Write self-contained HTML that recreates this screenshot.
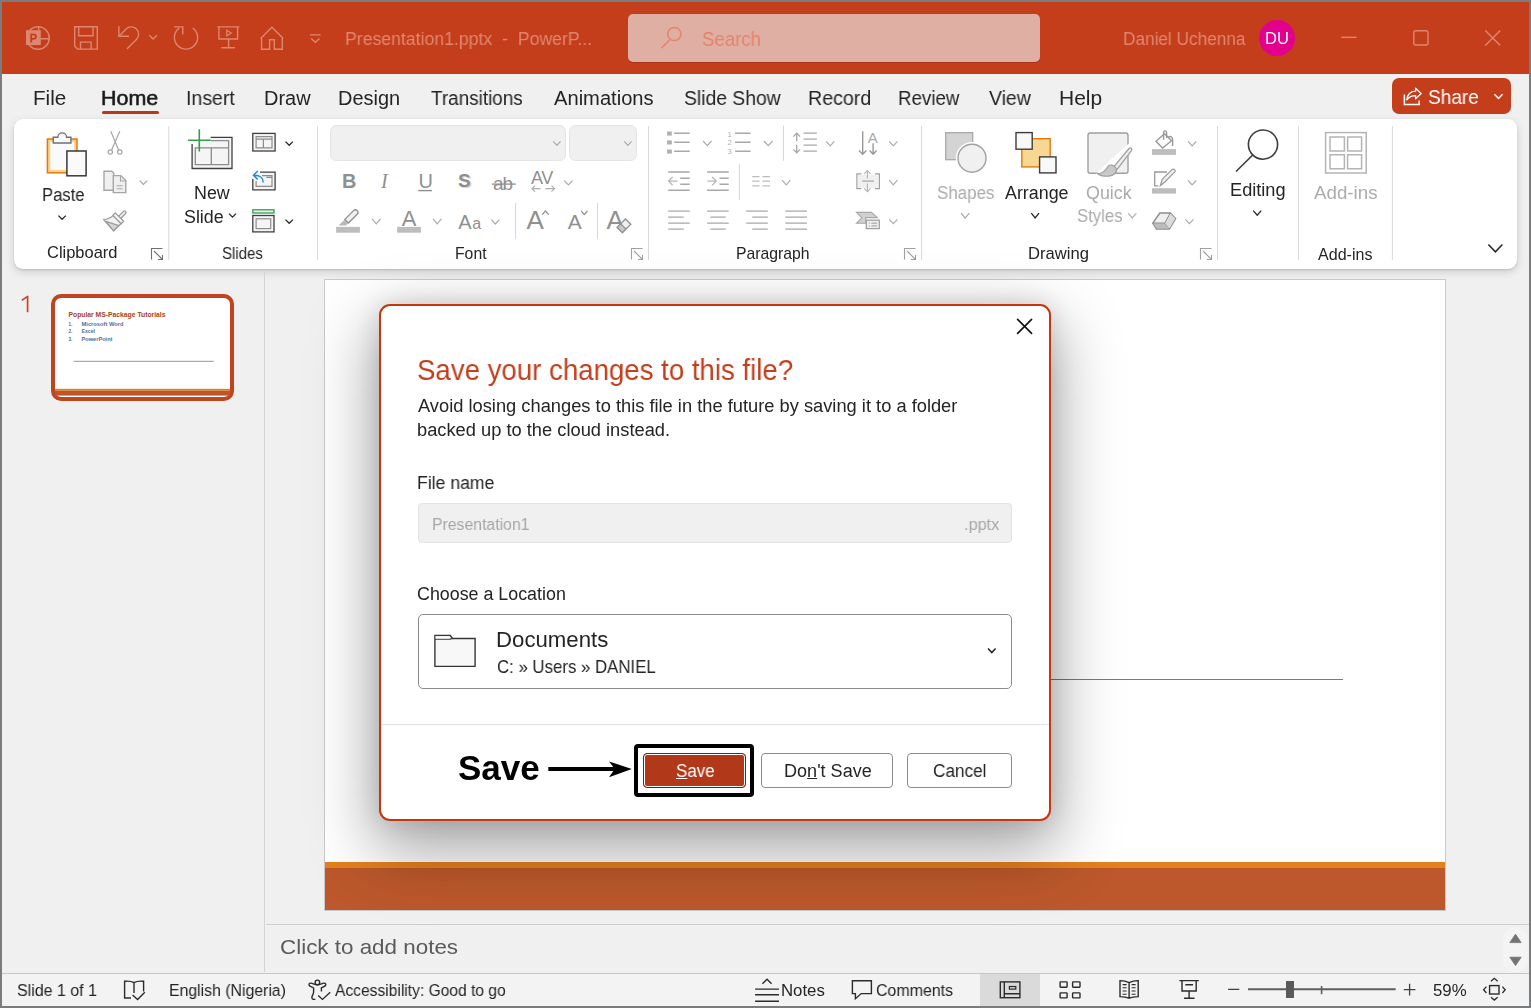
<!DOCTYPE html>
<html><head><meta charset="utf-8">
<style>
html,body{margin:0;padding:0;width:1531px;height:1008px;overflow:hidden;background:#777;}
body{position:relative;font-family:"Liberation Sans",sans-serif;}
.a{position:absolute;box-sizing:border-box;}
.t{position:absolute;white-space:pre;line-height:1;transform-origin:0 0;will-change:transform;font-family:"Liberation Sans",sans-serif;}
svg{position:absolute;overflow:visible;}
</style></head><body>
<!-- window frame -->
<div class="a" style="left:0;top:0;width:1531px;height:1008px;background:#7b7c7d;"></div>
<div class="a" style="left:2px;top:2px;width:1527px;height:1004px;background:#f0f0f0;"></div>
<!-- title bar -->
<div class="a" style="left:2px;top:2px;width:1527px;height:72px;background:#C43E1C;"></div>
<div class="a" style="left:628px;top:14px;width:412px;height:48px;background:#E0AFA3;border-radius:5px;box-shadow:0 1px 1px rgba(0,0,0,0.15);"></div>
<div class="a" style="left:1259px;top:20px;width:36px;height:36px;border-radius:50%;background:#E3008C;"></div>
<!-- share -->
<div class="a" style="left:1392px;top:78px;width:119px;height:36px;border-radius:7px;background:#C43E1C;"></div>
<!-- home underline -->
<div class="a" style="left:102px;top:111px;width:57px;height:3px;border-radius:2px;background:#B7391B;"></div>
<!-- ribbon card -->
<div class="a" style="left:14px;top:119px;width:1503px;height:150px;background:#fff;border-radius:9px;box-shadow:0 3px 8px rgba(0,0,0,0.15), 0 1px 2px rgba(0,0,0,0.12);"></div>
<!-- pane divider -->
<div class="a" style="left:264px;top:270px;width:1px;height:702px;background:#d4d4d4;"></div>
<!-- slide -->
<div class="a" style="left:324px;top:279px;width:1122px;height:632px;background:#fff;border:1px solid #c9c9c9;"></div>
<div class="a" style="left:325px;top:862px;width:1120px;height:6px;background:#E3801F;"></div>
<div class="a" style="left:325px;top:868px;width:1120px;height:42px;background:#BC582B;"></div>
<div class="a" style="left:1050px;top:679px;width:293px;height:1px;background:#7a7a7a;"></div>
<!-- notes divider -->
<div class="a" style="left:266px;top:924px;width:1263px;height:1px;background:#cfcfcf;"></div>
<!-- status bar -->
<div class="a" style="left:2px;top:973px;width:1527px;height:1px;background:#c9c7c5;"></div>
<div class="a" style="left:2px;top:974px;width:1527px;height:32px;background:#f3f3f3;"></div>
<div class="a" style="left:980px;top:974px;width:60px;height:32px;background:#dadada;"></div>
<!-- thumbnail -->
<div class="a" style="left:51px;top:294px;width:183px;height:107px;border:4px solid #C0441E;border-radius:10px;background:#fff;"></div>
<svg width="1531" height="1008" style="left:0;top:0">
<g fill="none" stroke="#DD8670" stroke-width="1.4">
 <circle cx="38" cy="38" r="11.3"/>
 <path d="M38.7 26.5V38.7H49.5"/>
 <rect x="26" y="30.2" width="14.8" height="14.8" fill="#DD8670" stroke="none"/>
 <path d="M31.2 42.6V34.3H33.6A2.3 2.3 0 0 1 33.6 38.9H31.2" stroke="#C43E1C" stroke-width="1.8"/>
 <path d="M74.7 26.8H97.3V49.1H77.6L74.7 46.2Z"/>
 <path d="M78.7 26.8V35.7H93V26.8"/>
 <path d="M80.5 49.1V42.1H91.1V49.1"/>
 <path d="M118.9 26.2V36.3H129"/>
 <path d="M119.3 35.9L126.05 29.05A7.35 7.35 0 0 1 136.45 39.45L126.9 49"/>
 <path d="M149.3 35.3L153.1 39.1L156.9 35.3"/>
 <path d="M192.8 28.1A11.6 11.6 0 1 1 179.2 28.1" />
 <path d="M174.2 26.9H182.8V34.5"/>
 <path d="M217.3 26.9H239.4M218.9 26.9V39H237.6V26.9M228.6 39V47.8M221.3 47.8H235"/>
 <path d="M226.8 30.2V35.8L231.2 33Z" stroke-width="1.2"/>
 <path d="M260.6 38.6L271.9 27.2L283.3 38.6M261.6 37.6V49.2H269.6V39.8H274.3V49.2H282.3V37.6"/>
 <path d="M310 34.9H320.7M311.2 38.5L315.4 42.3L319.5 38.5"/>
 <path d="M661.3 48.3L669.5 40.1" stroke="#E3846E" stroke-width="1.5"/>
 <circle cx="674.3" cy="34" r="6.6" stroke="#E3846E" stroke-width="1.5"/>
 <path d="M1341.3 37.3H1356.5" />
 <rect x="1413.8" y="30.8" width="14.2" height="14.2" rx="2"/>
 <path d="M1485.3 30.6L1500.3 45.6M1500.3 30.6L1485.3 45.6"/>
</g>
<g fill="none" stroke="#fff" stroke-width="1.5">
 <path d="M1404.4 94.6V104.4H1419.2V100.4"/>
 <path d="M1406.8 99.8C1407.4 94.6 1410.6 91.4 1415.6 91.2V88.2L1421.2 93.6L1415.6 98.8V95.6C1411.6 95.6 1408.8 97.2 1406.8 99.8Z" stroke-width="1.3" stroke-linejoin="round"/>
 <path d="M1494.4 94.3L1498.5 98.5L1502.6 94.3"/>
</g>

<g fill="none" stroke-width="1.4">
 <!-- paste -->
 <rect x="47.4" y="139" width="29.6" height="33.8" fill="#F7D38A" stroke="#E2780F" stroke-width="1.5"/>
 <rect x="50.3" y="141.9" width="23.8" height="28" fill="#FAFAFA" stroke="none"/>
 <path d="M53.3 143V137.3H57.8A4.4 4.4 0 0 1 66.6 137.3H70.9V143Z" fill="#FAFAFA" stroke="#707070"/>
 <rect x="66.9" y="151" width="19.2" height="24.8" fill="#FAFAFA" stroke="#383838" stroke-width="1.5"/>
 <path d="M58.4 215.6L62.1 219.3L65.8 215.6" stroke="#262626" stroke-width="1.3"/>
 <!-- cut -->
 <g stroke="#A6A6A6" stroke-width="1.2">
 <path d="M110.8 131.2L118.6 150M119.8 131.2L111.6 150"/>
 <circle cx="110.3" cy="152" r="2.2"/><circle cx="119.8" cy="152" r="2.2"/>
 </g>
 <!-- copy -->
 <g stroke="#A6A6A6" stroke-width="1.4" fill="#F0F0F0">
 <path d="M104 171.3H111.8L113.8 173.3V190.2H104Z"/>
 <path d="M113.3 175.6H120.8L125.8 180.6V192.6H113.3Z"/>
 <path d="M120.5 175.8V181H125.6M116.6 185.8H122.6M116.6 188.8H122.6" fill="none" stroke-width="1.1"/>
 </g>
 <path d="M139.6 180.6L143.4 184.4L147.1 180.6" stroke="#A6A6A6" stroke-width="1.2"/>
 <!-- format painter -->
 <g stroke="#9C9C9C" stroke-width="1.3" stroke-linejoin="round">
 <path d="M113 215.6C110.5 218 107 219.3 103.6 219.6L113.6 230.8L121.4 223.2Z" fill="#F2F2F2"/>
 <path d="M105.8 221.4L118.8 225.6L113.6 230.8Z" fill="#D4D4D4"/>
 <path d="M119.6 217.4L124.6 212.4" stroke-width="4.2" stroke-linecap="round"/>
 <path d="M119.6 217.4L124.6 212.4" stroke="#F4F4F4" stroke-width="1.6" stroke-linecap="round"/>
 <path d="M115.3 212.9L123.7 221.3L121.2 223.8L112.8 215.4Z" fill="#F4F4F4"/>
 </g>
 <!-- new slide -->
 <path d="M210.7 137.4H232V168.5H192.1V144" stroke="#404040" stroke-width="1.3" fill="#F5F5F5"/>
 <path d="M211 140.6H228.6V164.7H195.3V147.8H228.6M211.3 147.8V164.7" stroke="#8C8C8C" stroke-width="1.3"/>
 <rect x="193.3" y="138.2" width="4" height="8" fill="#fff" stroke="none"/>
 <path d="M188.1 140.2H210.7M199.3 129.3V151.6" stroke="#2F9E4E" stroke-width="1.6"/>
 <!-- layout -->
 <rect x="252.8" y="133.4" width="22.3" height="17.6" stroke="#404040" stroke-width="1.3" fill="#F5F5F5"/>
 <path d="M256.1 136.6H272V147.8H256.1ZM256.1 139.2H272M263.4 139.2V147.8" stroke="#8C8C8C" stroke-width="1.2"/>
 <path d="M285.5 141.6L289.2 145.3L292.9 141.6" stroke="#262626" stroke-width="1.3"/>
 <!-- reset -->
 <path d="M260 172.2H275.1V189.8H252.8V179" stroke="#404040" stroke-width="1.3" fill="#F5F5F5"/>
 <path d="M262 175.7H272V186.3H256.1V181M266.4 177.3H272" stroke="#8C8C8C" stroke-width="1.2"/>
 <path d="M263.2 182.4C263.2 178.4 260 175.3 254.4 175.3M257.8 171L253.5 175.3L257.6 179.4" stroke="#1F8AD6" stroke-width="1.5"/>
 <!-- section -->
 <rect x="252.8" y="209.8" width="21.2" height="3.2" stroke="#2F9E4E" stroke-width="1.3" fill="#F5F5F5"/>
 <rect x="252.8" y="215.5" width="21.2" height="16.4" stroke="#404040" stroke-width="1.3" fill="#F5F5F5"/>
 <rect x="256.1" y="218.8" width="14.6" height="9.8" stroke="#8C8C8C" stroke-width="1.2"/>
 <path d="M285.5 219.6L289.2 223.3L292.9 219.6" stroke="#262626" stroke-width="1.3"/>
 <path d="M229 213.6L232.5 217.1L236 213.6" stroke="#262626" stroke-width="1.3"/>
 <!-- separators -->
 <path d="M168.8 126V260M317.5 126V260M648.5 126V260M921.6 126V260M1217.5 126V260M1298.5 126V260M1392.4 126V260" stroke="#D9D9D9" stroke-width="1"/>
 <!-- dialog launchers -->
 <g stroke="#707070" stroke-width="1.1">
 <path d="M151.5 259.5V248.5H162.5M154 251L162 259M158 259.5H162.5V255"/>
 </g>
 <g stroke="#A0A0A0" stroke-width="1.1">
 <path d="M631.5 259.5V248.5H642.5M634 251L642 259M638 259.5H642.5V255"/>
 <path d="M904.5 259.5V248.5H915.5M907 251L915 259M911 259.5H915.5V255"/>
 <path d="M1200.5 259.5V248.5H1211.5M1203 251L1211 259M1207 259.5H1211.5V255"/>
 </g>
</g>

<g fill="none">
 <!-- font boxes -->
 <rect x="330.5" y="125.5" width="235" height="35" rx="6" fill="#F0F0F0" stroke="#E4E4E4"/>
 <rect x="569.5" y="125.5" width="67" height="35" rx="6" fill="#F0F0F0" stroke="#E4E4E4"/>
 <path d="M553.3 141.3L556.9 145.3L560.5 141.3" stroke="#A8A8A8" stroke-width="1.2" fill="none"/>
 <path d="M624.3 141.3L627.9 145.3L631.5 141.3" stroke="#A8A8A8" stroke-width="1.2" fill="none"/>
 <g font-family="Liberation Sans" fill="#8F8F8F" stroke="none">
  <text x="342" y="188" font-size="20" font-weight="bold">B</text>
  <text x="381" y="188" font-size="20" font-style="italic" font-family="Liberation Serif">I</text>
  <text x="418.4" y="187.6" font-size="20">U</text>
  <text x="459.5" y="187.5" font-size="19" font-weight="bold" fill="#D8D8D8">S</text>
  <text x="458" y="186.5" font-size="19" font-weight="bold">S</text>
  <text x="493" y="189.5" font-size="19" letter-spacing="-1">ab</text>
  <text x="531" y="183.6" font-size="18" letter-spacing="-0.5">AV</text>
  <text x="458.2" y="228.6" font-size="20">A</text>
  <text x="472.3" y="228.6" font-size="16">a</text>
  <text x="526.4" y="228.6" font-size="26">A</text>
  <text x="567.8" y="228.6" font-size="21">A</text>
  <text x="606.5" y="228.6" font-size="26">A</text>
 </g>
 <path d="M418.3 190.6H431.9" stroke="#8F8F8F" stroke-width="1.4"/>
 <path d="M491.9 184.1H515.8" stroke="#8F8F8F" stroke-width="1.3"/>
 <path d="M532 188.7H540.5M535 185.7L532 188.7L535 191.7M545.5 188.7H554.5M551.5 185.7L554.5 188.7L551.5 191.7" stroke="#B0B0B0" stroke-width="1.2"/>
 <path d="M564.3 180.6L568.4 184.8L572.5 180.6" stroke="#ABABAB" stroke-width="1.2" fill="none"/>
 <!-- highlighter -->
 <rect x="336.1" y="226.9" width="23.8" height="5.8" fill="#BDBDBD"/>
 <path d="M344.8 219.4L353.6 210.6A2 2 0 0 1 357.2 214.2L348.4 223Z" fill="#F0F0F0" stroke="#8F8F8F" stroke-width="1.3"/>
 <path d="M344.4 220L348 223.6L345.6 225.4H338.4Z" fill="#B8B8B8"/>
 <path d="M372.1 218.9L376.3 223.9L380.5 218.9" stroke="#ABABAB" stroke-width="1.2" fill="none"/>
 <rect x="397.1" y="226.9" width="23.8" height="5.8" fill="#BDBDBD"/>
 <text x="401.8" y="225.7" font-family="Liberation Sans" font-size="22" fill="#8F8F8F">A</text>
 <path d="M433 218.9L437.2 223.9L441.4 218.9" stroke="#ABABAB" stroke-width="1.2" fill="none"/>
 <path d="M491.3 219.7L495.35 224L499.4 219.7" stroke="#ABABAB" stroke-width="1.2" fill="none"/>
 <path d="M515.6 203V238.7M597.5 203V238.7" stroke="#D6D6D6"/>
 <path d="M542.3 214.6L545.5 211L548.7 214.6" stroke="#8F8F8F" stroke-width="1.2"/>
 <path d="M581.2 211L584.3 214.6L587.5 211" stroke="#8F8F8F" stroke-width="1.2"/>
 <path d="M617.2 227.4L625.5 219L630.8 224.2L622.4 232.6Z" fill="#F0F0F0" stroke="#8F8F8F" stroke-width="1.3"/>
 <path d="M617.2 227.4L620.8 223.8L626 229L622.4 232.6Z" fill="#C8C8C8" stroke="#8F8F8F" stroke-width="1.1"/>
 <!-- paragraph -->
 <g fill="#B0B0B0">
  <rect x="667.1" y="131.5" width="4.7" height="4.1"/><rect x="667.1" y="140.4" width="4.7" height="4.1"/><rect x="667.1" y="149.5" width="4.7" height="4.1"/>
 </g>
 <path d="M674.2 133.2H689.7M674.2 142.2H689.7M674.2 151.2H689.7" stroke="#A8A8A8" stroke-width="1.4"/>
 <path d="M703.1 141L707.3 145.6L711.5 141" stroke="#ABABAB" stroke-width="1.2" fill="none"/>
 <g font-family="Liberation Sans" font-size="7.5" fill="#B0B0B0"><text x="727.6" y="136.5">1</text><text x="727.6" y="145.3">2</text><text x="727.6" y="154.4">3</text></g>
 <path d="M735.1 133.2H750.6M735.1 142.2H750.6M735.1 151.2H750.6" stroke="#A8A8A8" stroke-width="1.4"/>
 <path d="M763.9 141L768.25 145.6L772.6 141" stroke="#ABABAB" stroke-width="1.2" fill="none"/>
 <path d="M783.5 125.5V160.7M739.4 164.2V200" stroke="#D6D6D6"/>
 <path d="M796.7 133.4V141.2M793.3 136.6L796.7 133.2L800.1 136.6M796.7 144.8V152.6M793.3 149.4L796.7 152.8L800.1 149.4" stroke="#A8A8A8" stroke-width="1.3"/>
 <path d="M803.5 133.1H816.9M803.5 139.1H816.9M803.5 145.1H816.9M803.5 151.1H816.9" stroke="#A8A8A8" stroke-width="1.4"/>
 <path d="M826.2 141.3L830.25 145.9L834.3 141.3" stroke="#ABABAB" stroke-width="1.2" fill="none"/>
 <path d="M862.7 131.2V154.2M859 150.5L862.7 154.2L866.4 150.5M873.1 143.2V154.2M869.6 150.5L873.1 154.2L876.6 150.5" stroke="#999" stroke-width="1.4"/>
 <text x="867.8" y="142.9" font-family="Liberation Sans" font-size="15" fill="#ABABAB">A</text>
 <path d="M889.2 141.3L893.3 145.9L897.4 141.3" stroke="#ABABAB" stroke-width="1.2" fill="none"/>
 <!-- indent -->
 <path d="M668.2 172H689.7M680.2 178.2H689.7M680.2 184.2H689.7M668.2 190.2H689.7" stroke="#A8A8A8" stroke-width="1.4"/>
 <path d="M668.8 181.1H677.5M672.6 177L668.6 181.1L672.6 185.2" stroke="#B8B8B8" stroke-width="1.3"/>
 <path d="M707.1 172H728.7M719.5 178.2H728.7M719.5 184.2H728.7M707.1 190.2H728.7" stroke="#A8A8A8" stroke-width="1.4"/>
 <path d="M707.3 181.1H716M712.2 177L716.2 181.1L712.2 185.2" stroke="#B8B8B8" stroke-width="1.3"/>
 <path d="M752.2 176.7H759.5M762.4 176.7H770M752.2 181.1H759.5M762.4 181.1H770M752.2 185.8H759.5M762.4 185.8H770" stroke="#BDBDBD" stroke-width="1.3"/>
 <path d="M782 180.2L786.2 184.9L790.4 180.2" stroke="#ABABAB" stroke-width="1.2" fill="none"/>
 <path d="M861.3 174H857V188.6H861.3M875 174H879.3V188.6H875" stroke="#A0A0A0" stroke-width="1.4"/>
 <rect x="857.6" y="174.6" width="21" height="13.4" fill="#F0F0F0"/>
 <path d="M862.2 181.1H873.9" stroke="#A8A8A8" stroke-width="1.3"/>
 <path d="M867.4 170.6V178.6M864.2 173.8L867.4 170.6L870.6 173.8M867.4 183.6V191.6M864.2 188.4L867.4 191.6L870.6 188.4" stroke="#B8B8B8" stroke-width="1.2"/>
 <path d="M889.2 180.2L893.3 184.9L897.4 180.2" stroke="#ABABAB" stroke-width="1.2" fill="none"/>
 <path d="M668.2 211.1H689.7M668.2 217.1H683.8M668.2 223.1H689.7M668.2 229.1H683.8" stroke="#A8A8A8" stroke-width="1.4"/>
 <path d="M707.1 211.1H728.7M710.4 217.1H725.7M707.1 223.1H728.7M710.4 229.1H725.7" stroke="#A8A8A8" stroke-width="1.4"/>
 <path d="M746.2 211.1H767.8M752.2 217.1H767.8M746.2 223.1H767.8M752.2 229.1H767.8" stroke="#A8A8A8" stroke-width="1.4"/>
 <path d="M785.3 211.1H807M785.3 217.1H807M785.3 223.1H807M785.3 229.1H807" stroke="#A8A8A8" stroke-width="1.4"/>
 <path d="M856.5 212.4H871.4L877.3 217.6H865.7V223.3H856.5L861.8 217.8Z" fill="#D0D0D0" stroke="#A8A8A8" stroke-width="1.1"/>
 <rect x="866.3" y="220.2" width="13" height="8.4" fill="#F0F0F0" stroke="#A0A0A0" stroke-width="1.3"/>
 <path d="M868.8 223.1H869.8M871.3 223.1H877M868.8 225.9H869.8M871.3 225.9H877" stroke="#A8A8A8" stroke-width="1.1"/>
 <path d="M889.2 219.3L893.3 223.6L897.4 219.3" stroke="#ABABAB" stroke-width="1.2" fill="none"/>
 <!-- drawing -->
 <rect x="945.7" y="132.7" width="27" height="27" fill="#D4D4D4" stroke="#A8A8A8" stroke-width="1.3"/>
 <circle cx="972" cy="158.2" r="16.2" fill="#fff"/>
 <circle cx="972" cy="158.2" r="14" fill="#F0F0F0" stroke="#A0A0A0" stroke-width="1.4"/>
 <path d="M961 213.2L965.2 218L969.4 213.2" stroke="#ABABAB" stroke-width="1.2" fill="none"/>
 <rect x="1021.8" y="138.7" width="28.4" height="28.2" fill="#F8D792" stroke="#E2780F" stroke-width="1.4"/>
 <rect x="1016" y="132.6" width="16.2" height="16.6" fill="#F8F8F8" stroke="#3C3C3C" stroke-width="1.4"/>
 <rect x="1039.6" y="156.9" width="16.4" height="16" fill="#F8F8F8" stroke="#3C3C3C" stroke-width="1.4"/>
 <path d="M1031.3 213.2L1035.15 218L1039 213.2" stroke="#262626" stroke-width="1.3" fill="none"/>
 <rect x="1088" y="133" width="40" height="40.2" rx="2.2" fill="#F0F0F0" stroke="#A0A0A0" stroke-width="1.4"/>
 <path d="M1099 176L1112 163L1131.5 146" stroke="#fff" stroke-width="7" stroke-linecap="round"/>
 <path d="M1113.6 167.2L1129 148.5A1.6 1.6 0 0 1 1131.6 150.3L1117.2 169.2Z" fill="#F0F0F0" stroke="#A0A0A0" stroke-width="1.3"/>
 <path d="M1097 173.2C1102 174.8 1106 170 1107.3 167.2C1109.6 163.6 1114.5 164.8 1116.2 168.4C1117.6 172.6 1113.4 176 1108.6 176.2C1104 176.4 1099.6 175.4 1097 173.2Z" fill="#C8C8C8" stroke="#A0A0A0" stroke-width="1.2"/>
 <path d="M1128.3 213.4L1132.3 217.8L1136.3 213.4" stroke="#ABABAB" stroke-width="1.2" fill="none"/>
 <path d="M1156 141.3L1164.6 133.8L1171.5 140.8L1162.6 148Z" fill="#fff" stroke="#999" stroke-width="1.4"/>
 <path d="M1163.6 140V132.4A1.5 1.5 0 0 1 1166.6 132.4V138" stroke="#999" stroke-width="1.4"/>
 <path d="M1168 137.6C1170 135.4 1172.4 136.8 1172.6 139.4V146" stroke="#999" stroke-width="1.4"/>
 <rect x="1152" y="149.1" width="24" height="5.8" fill="#BDBDBD"/>
 <path d="M1188 141.3L1192.1 145.9L1196.2 141.3" stroke="#ABABAB" stroke-width="1.2" fill="none"/>
 <path d="M1167 172H1154.7V185.8H1158.2" stroke="#999" stroke-width="1.3"/>
 <path d="M1160.4 185.5L1162.2 179.4L1172 169.6A1.8 1.8 0 0 1 1174.6 172.2L1164.8 182Z" fill="#F0F0F0" stroke="#999" stroke-width="1.2"/>
 <rect x="1152" y="188.2" width="24" height="5.4" fill="#BDBDBD"/>
 <path d="M1188 180.5L1192.1 184.9L1196.2 180.5" stroke="#ABABAB" stroke-width="1.2" fill="none"/>
 <path d="M1152.8 223.2L1159.8 213H1170.4L1175.6 218.6L1169.4 229H1156.6Z" fill="#F0F0F0" stroke="#8C8C8C" stroke-width="1.4"/>
 <path d="M1152.8 223.2H1164.8L1170.4 213M1164.8 223.2L1169.4 229" stroke="#8C8C8C" stroke-width="1.2"/>
 <path d="M1153.4 223.8H1164.6L1169 228.6H1156.8Z" fill="#BDBDBD"/>
 <path d="M1165.2 223.2L1170.6 213.6L1175.2 218.6L1169.4 228.6Z" fill="#DCDCDC"/>
 <path d="M1185.3 219.3L1189.4 223.6L1193.5 219.3" stroke="#ABABAB" stroke-width="1.2" fill="none"/>
 <!-- editing -->
 <circle cx="1263" cy="144.6" r="14.6" fill="none" stroke="#3C3C3C" stroke-width="1.6"/>
 <path d="M1252.5 155.2L1236 171.5" stroke="#3C3C3C" stroke-width="1.6"/>
 <path d="M1253.2 210.6L1257.2 215.2L1261.2 210.6" stroke="#262626" stroke-width="1.3" fill="none"/>
 <!-- add-ins -->
 <rect x="1325.6" y="132.6" width="40.6" height="40.4" fill="none" stroke="#B4B4B4" stroke-width="1.5"/>
 <path d="M1330 136.9H1344.4V151.1H1330ZM1347.6 136.9H1361.6V151.1H1347.6ZM1330 154.7H1344.4V168.7H1330ZM1347.6 154.7H1361.6V168.7H1347.6Z" fill="none" stroke="#B4B4B4" stroke-width="1.5"/>
 <path d="M1488.4 244.6L1495.4 251.8L1502.4 244.6" stroke="#262626" stroke-width="1.5"/>
</g>

<g fill="none" stroke="#2B2B2B" stroke-width="1.4">
 <path d="M131 998H124.6V981.2C128 981.2 131 980.8 134 982.6C137 980.8 140.2 981.2 143.6 981.2V991.6M134 982.6V993"/>
 <path d="M132.6 995L137.6 999.6L144.8 992.2"/>
 <circle cx="317.4" cy="982.4" r="2.3"/>
 <path d="M313.6 987.7C311 986.8 309.3 986.4 309 985C308.7 983.5 310.2 982.7 312 983.3C314 984 315.5 984.8 317.4 984.8C319.3 984.8 320.8 984 322.8 983.3C324.6 982.7 326.1 983.5 325.8 985C325.5 986.4 323.8 986.8 321.4 987.7V991.6M313.6 987.7V992.2C313.6 994.2 311.9 995.6 311.9 997.4C311.9 999 313.4 999.8 315.3 999.1"/>
 <path d="M318.2 995.4L322.5 999.4L330.2 992.2"/>
 <path d="M762.4 983.8L767 979.2L771.6 983.8M755.1 989.1H779M755.1 994.7H779M755.1 1001.2H779"/>
 <path d="M852.4 980.8H871.4V993.6H861.2L855.4 998.8V993.6H852.4Z"/>
 <rect x="1000.3" y="981.9" width="19.6" height="15.8"/>
 <path d="M1004.3 981.9V997.7M1004.3 993.8H1019.9"/>
 <rect x="1009.4" y="986.5" width="6.4" height="2.6" stroke-width="1.2"/>
 <rect x="1060.1" y="981.9" width="7" height="5.3" rx="0.6"/>
 <rect x="1072.6" y="981.9" width="7.4" height="5.3" rx="0.6"/>
 <rect x="1060.1" y="992.9" width="7" height="5" rx="0.6"/>
 <rect x="1072.6" y="992.9" width="7.4" height="5" rx="0.6"/>
 <path d="M1129.1 982.6C1126 981 1123 980.6 1120 980.6V996.6C1123 996.6 1126 996.8 1129.1 998.2C1132.2 996.8 1135.2 996.6 1138.2 996.6V980.6C1135.2 980.6 1132.2 981 1129.1 982.6ZM1129.1 982.6V998.2"/>
 <path d="M1122.6 984.6H1126.6M1122.6 987.8H1126.6M1122.6 991H1126.6M1122.6 994.2H1126.6M1131.6 984.6H1135.6M1131.6 987.8H1135.6M1131.6 991H1135.6M1131.6 994.2H1135.6" stroke-width="1.1"/>
 <path d="M1179.4 980.6H1198.8M1182 980.6V991H1196.2V980.6M1185.3 984.8H1193M1189.1 991V998.3M1184 998.3H1194.5"/>
 <path d="M1228.1 989.3H1239.3M1403.8 989.6H1415.4M1409.6 983.8V995.4" stroke="#404040" stroke-width="1.3"/>
 <path d="M1248 989.3H1395.7" stroke="#5F5F5F" stroke-width="2"/>
 <path d="M1321.6 986V994.2" stroke="#5F5F5F" stroke-width="1.6"/>
 <rect x="1286" y="981" width="8" height="17" fill="#5A5A5A" stroke="none"/>
 <rect x="1489.6" y="985.6" width="9.4" height="8.4"/>
 <path d="M1491 981.2L1494.3 978.3L1497.6 981.2M1491 997.2L1494.3 1000.1L1497.6 997.2M1486.4 986.6L1483.6 989.8L1486.4 993M1502.4 986.6L1505.2 989.8L1502.4 993" stroke-width="1.3"/>
</g>
<rect x="1503" y="927.5" width="24.6" height="44.6" rx="12" fill="#F4F4F4"/>
<path d="M1515.5 934.2L1521.2 942.6H1509.8Z M1509.8 957.2H1521.2L1515.5 965.6Z" fill="#737373" stroke="#737373" stroke-width="0.8" stroke-linejoin="round"/>

<path d="M27.6 312.3V296.4L21.8 300.4" fill="none" stroke="#C94620" stroke-width="1.7" stroke-linejoin="round"/>
<g font-family="Liberation Sans" font-weight="bold">
 <text x="68.5" y="316.8" font-size="6.6" fill="#A64322" textLength="97" lengthAdjust="spacingAndGlyphs">Popular MS-Package Tutorials</text>
 <g font-size="4.6" fill="#4F6E9E"><text x="68.5" y="325.8">1.</text><text x="81.5" y="325.8" textLength="42" lengthAdjust="spacingAndGlyphs">Microsoft Word</text>
 <text x="68.5" y="332.8">2.</text><text x="81.5" y="332.8" textLength="13.5" lengthAdjust="spacingAndGlyphs">Excel</text>
 <text x="68.5" y="340.6">3.</text><text x="81.5" y="340.6" textLength="31" lengthAdjust="spacingAndGlyphs">PowerPoint</text></g>
</g>
<path d="M73.7 361.3H213.7" stroke="#8A8A8A" stroke-width="0.9"/>
<rect x="55" y="388.8" width="175" height="2" fill="#E0801E"/>
<rect x="55" y="390.8" width="175" height="4.8" fill="#BC552A"/>
</svg>
<!-- dialog -->
<div class="a" style="left:379px;top:304px;width:672px;height:517px;background:#fff;border:2px solid #C6370F;border-radius:11px;box-shadow:0 0 24px rgba(0,0,0,0.12), 0 24px 64px 6px rgba(0,0,0,0.35);"></div>
<div class="a" style="left:418px;top:503px;width:594px;height:40px;background:#f0f0f0;border:1px solid #e3e3e3;border-radius:4px;"></div>
<div class="a" style="left:418px;top:614px;width:594px;height:75px;background:#fff;border:1px solid #8c8c8c;border-radius:5px;"></div>
<div class="a" style="left:382px;top:724px;width:667px;height:1px;background:#e0e0e0;"></div>
<div class="a" style="left:634px;top:744px;width:120px;height:53px;border:4px solid #000;border-radius:4px;"></div>
<div class="a" style="left:643px;top:753px;width:103px;height:35px;background:#B2381A;border:1px solid #6a230f;border-radius:4px;box-shadow:inset 0 0 0 1px #fff;"></div>
<div class="a" style="left:761px;top:753px;width:132px;height:35px;background:#fff;border:1px solid #8c8c8c;border-radius:4px;"></div>
<div class="a" style="left:907px;top:753px;width:105px;height:35px;background:#fff;border:1px solid #8c8c8c;border-radius:4px;"></div>
<svg width="1531" height="1008" style="left:0;top:0">
<path d="M1017.6 319.4L1031.6 333.4M1031.6 319.4L1017.6 333.4" stroke="#111" stroke-width="1.6" stroke-linecap="round"/>
<path d="M434.9 666.4V635.5H450.2L452.6 638.5H475.1V666.4Z" fill="#F8F8F8" stroke="#363636" stroke-width="1.4"/>
<path d="M434.9 639.2H450.2L452.6 638.5" fill="none" stroke="#363636" stroke-width="1.3"/>
<rect x="435.6" y="636.2" width="14" height="2.4" fill="#fff"/>
<path d="M988 648.6L991.8 652.6L995.6 648.6" fill="none" stroke="#222" stroke-width="1.5"/>
<path d="M548.3 769H615" stroke="#000" stroke-width="4"/>
<path d="M631.8 769L609 761.4L614.8 769L609 777.2Z" fill="#000"/>
</svg>
<div class="t" style="left:345.06px;top:30px;font-size:18.9px;color:#E08670;transform:scaleX(0.9351);">Presentation1.pptx  -  PowerP...</div>
<div class="t" style="left:702.07px;top:30px;font-size:19.95px;color:#E3846E;transform:scaleX(0.9344);">Search</div>
<div class="t" style="left:1123.09px;top:30px;font-size:18.9px;color:#E08670;transform:scaleX(0.9104);">Daniel Uchenna</div>
<div class="t" style="left:1264.95px;top:31px;font-size:15.75px;color:#FFFFFF;transform:scaleX(1.0476);">DU</div>
<div class="t" style="left:32.93px;top:89px;font-size:19.95px;color:#242424;transform:scaleX(1.0345);">File</div>
<div class="t" style="left:101.45px;top:89px;font-size:19.95px;color:#1a1a1a;-webkit-text-stroke:0.55px #1a1a1a;transform:scaleX(1.0760);">Home</div>
<div class="t" style="left:186.04px;top:89px;font-size:19.95px;color:#242424;transform:scaleX(0.9792);">Insert</div>
<div class="t" style="left:264.00px;top:89px;font-size:19.95px;color:#242424;">Draw</div>
<div class="t" style="left:338.00px;top:89px;font-size:19.95px;color:#242424;">Design</div>
<div class="t" style="left:431.00px;top:89px;font-size:19.95px;color:#242424;transform:scaleX(0.9479);">Transitions</div>
<div class="t" style="left:554.00px;top:89px;font-size:19.95px;color:#242424;transform:scaleX(1.0102);">Animations</div>
<div class="t" style="left:684.03px;top:89px;font-size:19.95px;color:#242424;transform:scaleX(0.9697);">Slide Show</div>
<div class="t" style="left:808.03px;top:89px;font-size:19.95px;color:#242424;transform:scaleX(0.9836);">Record</div>
<div class="t" style="left:898.12px;top:89px;font-size:19.95px;color:#242424;transform:scaleX(0.9375);">Review</div>
<div class="t" style="left:989.00px;top:89px;font-size:19.95px;color:#242424;transform:scaleX(0.9767);">View</div>
<div class="t" style="left:1058.89px;top:89px;font-size:19.95px;color:#242424;transform:scaleX(1.0526);">Help</div>
<div class="t" style="left:1428.09px;top:86px;font-size:21.0px;color:#FFFFFF;transform:scaleX(0.9074);">Share</div>
<div class="t" style="left:42.07px;top:187px;font-size:17.85px;color:#242424;transform:scaleX(0.9318);">Paste</div>
<div class="t" style="left:46.95px;top:245px;font-size:15.75px;color:#242424;transform:scaleX(1.0455);">Clipboard</div>
<div class="t" style="left:194.00px;top:185px;font-size:17.85px;color:#242424;">New</div>
<div class="t" style="left:184.00px;top:209px;font-size:17.85px;color:#242424;">Slide</div>
<div class="t" style="left:222.05px;top:246px;font-size:15.75px;color:#242424;transform:scaleX(0.9524);">Slides</div>
<div class="t" style="left:455.00px;top:246px;font-size:15.75px;color:#242424;">Font</div>
<div class="t" style="left:736.00px;top:246px;font-size:15.75px;color:#242424;">Paragraph</div>
<div class="t" style="left:937.05px;top:185px;font-size:17.85px;color:#ABABAB;transform:scaleX(0.9492);">Shapes</div>
<div class="t" style="left:1005.00px;top:185px;font-size:17.85px;color:#242424;">Arrange</div>
<div class="t" style="left:1086.00px;top:185px;font-size:17.85px;color:#ABABAB;">Quick</div>
<div class="t" style="left:1077.06px;top:208px;font-size:17.85px;color:#ABABAB;transform:scaleX(0.9362);">Styles</div>
<div class="t" style="left:1027.95px;top:246px;font-size:15.75px;color:#242424;transform:scaleX(1.0536);">Drawing</div>
<div class="t" style="left:1229.98px;top:182px;font-size:17.85px;color:#242424;transform:scaleX(1.0189);">Editing</div>
<div class="t" style="left:1314.00px;top:185px;font-size:17.85px;color:#ABABAB;transform:scaleX(1.0500);">Add-ins</div>
<div class="t" style="left:1318.00px;top:247px;font-size:15.75px;color:#242424;transform:scaleX(1.0189);">Add-ins</div>
<div class="t" style="left:417.06px;top:355px;font-size:29.4px;color:#C43E1C;transform:scaleX(0.9397);">Save your changes to this file?</div>
<div class="t" style="left:418.00px;top:398px;font-size:17.85px;color:#242424;transform:scaleX(1.0247);">Avoid losing changes to this file in the future by saving it to a folder</div>
<div class="t" style="left:416.98px;top:422px;font-size:17.85px;color:#242424;transform:scaleX(1.0245);">backed up to the cloud instead.</div>
<div class="t" style="left:417.01px;top:475px;font-size:17.85px;color:#242424;transform:scaleX(0.9870);">File name</div>
<div class="t" style="left:432.06px;top:517px;font-size:16.8px;color:#A6A6A6;transform:scaleX(0.9412);">Presentation1</div>
<div class="t" style="left:964.03px;top:517px;font-size:16.8px;color:#A6A6A6;transform:scaleX(0.9714);">.pptx</div>
<div class="t" style="left:417.00px;top:586px;font-size:17.85px;color:#242424;">Choose a Location</div>
<div class="t" style="left:495.98px;top:629px;font-size:22px;color:#242424;transform:scaleX(1.0092);">Documents</div>
<div class="t" style="left:497.09px;top:658px;font-size:18.5px;color:#242424;transform:scaleX(0.9075);">C: » Users » DANIEL</div>
<div class="t" style="left:458.00px;top:750px;font-size:35px;color:#000000;font-weight:700;">Save</div>
<div class="t" style="left:676.00px;top:763px;font-size:17.85px;color:#FFFFFF;transform:scaleX(0.9500);"><u>S</u>ave</div>
<div class="t" style="left:783.99px;top:763px;font-size:17.85px;color:#242424;transform:scaleX(1.0118);">Do<u>n</u>'t Save</div>
<div class="t" style="left:933.04px;top:763px;font-size:17.85px;color:#242424;transform:scaleX(0.9623);">Cancel</div>
<div class="t" style="left:279.93px;top:936px;font-size:21.0px;color:#5A5A5A;transform:scaleX(1.0667);">Click to add notes</div>
<div class="t" style="left:17.05px;top:983px;font-size:16.8px;color:#242424;transform:scaleX(0.9512);">Slide 1 of 1</div>
<div class="t" style="left:169.06px;top:983px;font-size:16.8px;color:#242424;transform:scaleX(0.9426);">English (Nigeria)</div>
<div class="t" style="left:335.00px;top:983px;font-size:16.8px;color:#242424;transform:scaleX(0.9290);">Accessibility: Good to go</div>
<div class="t" style="left:781.00px;top:983px;font-size:16.8px;color:#242424;">Notes</div>
<div class="t" style="left:876.05px;top:983px;font-size:16.8px;color:#242424;transform:scaleX(0.9500);">Comments</div>
<div class="t" style="left:1433.00px;top:983px;font-size:16.8px;color:#242424;">59%</div>
</body></html>
